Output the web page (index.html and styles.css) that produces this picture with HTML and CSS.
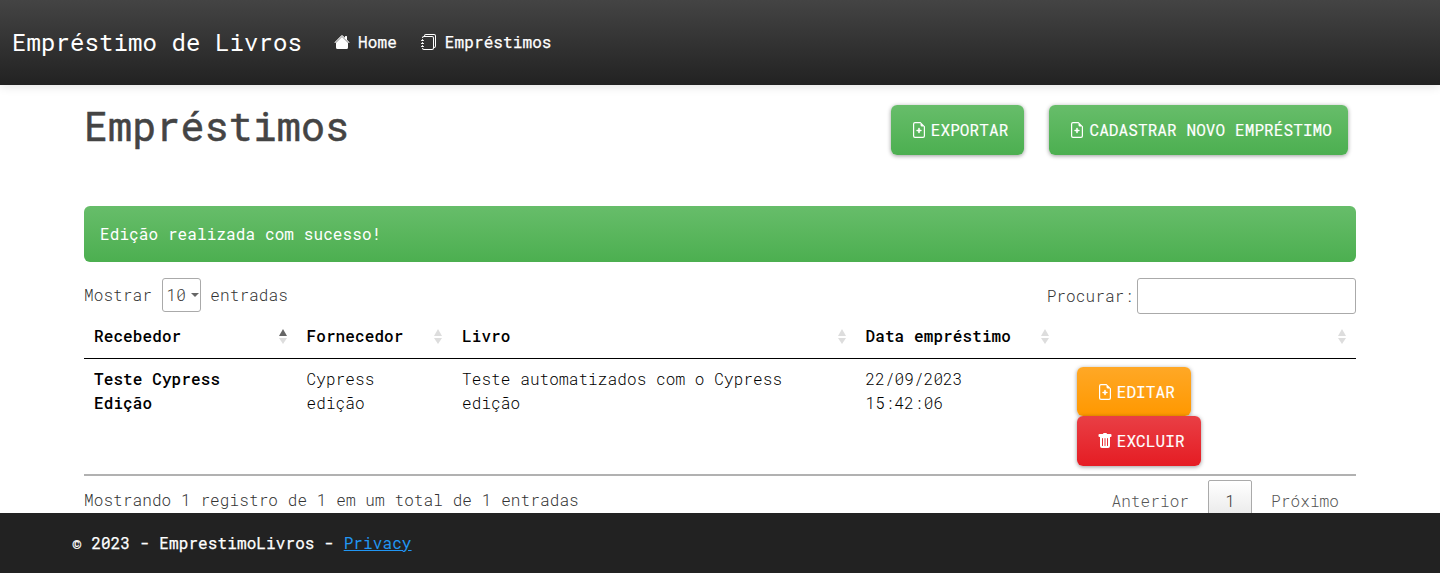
FILE: index.html
```html
<!DOCTYPE html>
<html lang="pt-BR">
<head>
<meta charset="utf-8">
<title>Empréstimos</title>
<link rel="stylesheet" href="styles.css">
</head>
<body>
<svg class="defs" width="0" height="0">
  <symbol id="file-plus" viewBox="0 0 16 16">
    <path d="M8 5.800a.8.8 0 0 1 .8.8V7.700H9.900a.8.8 0 0 1 0 1.600H8.800V10.400a.8.8 0 0 1-1.600 0V9.300H6.100a.8.8 0 0 1 0-1.600H7.200V6.600A.8.8 0 0 1 8 5.800z"/>
    <path d="M14 4.500V14a2 2 0 0 1-2 2H4a2 2 0 0 1-2-2V2a2 2 0 0 1 2-2h5.500L14 4.500zm-3 0A1.500 1.500 0 0 1 9.500 3V1.200H4a.9.9 0 0 0-.8.800v12a.9.9 0 0 0 .8.800h8a.9.9 0 0 0 .8-.8V4.500h-1.800z"/>
  </symbol>
</svg>
<header class="navbar">
  <a class="brand">Empréstimo de Livros</a>
  <a class="nav-link home"><svg class="icon" viewBox="0 0 16 16"><path d="M8.707 1.500a1 1 0 0 0-1.414 0L.646 8.146a.5.5 0 0 0 .708.708L8 2.207l6.646 6.647a.5.5 0 0 0 .708-.708L13 5.793V2.500a.5.5 0 0 0-.5-.5h-1a.5.5 0 0 0-.5.5v1.293L8.707 1.500Z"/><path d="m8 2.800 6 6V13.500a1.500 1.500 0 0 1-1.500 1.500h-9A1.500 1.500 0 0 1 2 13.500V8.800l6-6Z"/></svg>Home</a>
  <a class="nav-link"><svg class="icon" viewBox="0 0 16 16"><path d="M5 0h8a2 2 0 0 1 2 2v10a2 2 0 0 1-2 2 2 2 0 0 1-2 2H3a2 2 0 0 1-2-2h1a1 1 0 0 0 1 1h8a1 1 0 0 0 1-1V4a1 1 0 0 0-1-1H3a1 1 0 0 0-1 1H1a2 2 0 0 1 2-2h8a2 2 0 0 1 2 2v9a1 1 0 0 0 1-1V2a1 1 0 0 0-1-1H5a1 1 0 0 0-1 1H3a2 2 0 0 1 2-2z"/><path d="M1 6v-.5a.5.5 0 0 1 1 0V6h.5a.5.5 0 0 1 0 1h-2a.5.5 0 0 1 0-1H1zm0 3v-.5a.5.5 0 0 1 1 0V9h.5a.5.5 0 0 1 0 1h-2a.5.5 0 0 1 0-1H1zm0 2.500v.5H.5a.5.5 0 0 0 0 1h2a.5.5 0 0 0 0-1H2v-.5a.5.5 0 0 0-1 0z"/></svg>Empréstimos</a>
</header>
<main class="container">
  <div class="heading">
    <h1>Empréstimos</h1>
    <div class="actions">
      <a class="btn green"><svg class="icon"><use href="#file-plus"/></svg>EXPORTAR</a>
      <a class="btn green"><svg class="icon"><use href="#file-plus"/></svg>CADASTRAR NOVO EMPRÉSTIMO</a>
    </div>
  </div>
  <div class="alert">Edição realizada com sucesso!</div>
  <div class="controls">
    <label class="length">Mostrar <span class="select">10<i class="caret"></i></span> entradas</label>
    <label class="search">Procurar:<input type="text"></label>
  </div>
  <table>
    <colgroup><col class="c1"><col class="c2"><col class="c3"><col class="c4"><col></colgroup>
    <thead>
      <tr>
        <th><div class="th">Recebedor<i class="sort asc"></i></div></th>
        <th><div class="th">Fornecedor<i class="sort"></i></div></th>
        <th><div class="th">Livro<i class="sort"></i></div></th>
        <th><div class="th">Data empréstimo<i class="sort"></i></div></th>
        <th><div class="th"><span></span><i class="sort"></i></div></th>
      </tr>
    </thead>
    <tbody>
      <tr>
        <td class="strong">Teste Cypress<br>Edição</td>
        <td>Cypress<br>edição</td>
        <td>Teste automatizados com o Cypress<br>edição</td>
        <td>22/09/2023<br>15:42:06</td>
        <td><div class="row-actions">
          <a class="btn orange"><svg class="icon"><use href="#file-plus"/></svg>EDITAR</a>
          <a class="btn red"><svg class="icon" viewBox="0 0 16 16"><path d="M2.500 1a1 1 0 0 0-1 1v1a1 1 0 0 0 1 1H3v9a2 2 0 0 0 2 2h6a2 2 0 0 0 2-2V4h.5a1 1 0 0 0 1-1V2a1 1 0 0 0-1-1H10a1 1 0 0 0-1-1H7a1 1 0 0 0-1 1H2.500zm3 4a.5.5 0 0 1 .5.5v7a.5.5 0 0 1-1 0v-7a.5.5 0 0 1 .5-.5zM8 5a.5.5 0 0 1 .5.5v7a.5.5 0 0 1-1 0v-7A.5.5 0 0 1 8 5zm3 .5v7a.5.5 0 0 1-1 0v-7a.5.5 0 0 1 1 0z"/></svg>EXCLUIR</a>
        </div></td>
      </tr>
    </tbody>
  </table>
  <div class="table-footer">
    <div class="info">Mostrando 1 registro de 1 em um total de 1 entradas</div>
    <div class="pages"><a>Anterior</a><a class="current">1</a><a>Próximo</a></div>
  </div>
</main>
<footer class="footer">© 2023 - EmprestimoLivros - <a>Privacy</a></footer>
</body>
</html>
```
FILE: styles.css
```css
* { box-sizing: border-box; }
html, body { height: 100%; }
body {
  margin: 0;
  display: flex;
  flex-direction: column;
  overflow: hidden;
  background: #fff;
  color: #333;
  font: 300 16px/24px "Roboto Mono", "Liberation Mono", monospace;
  letter-spacing: .1px;
}
.defs { position: absolute; }
.icon { width: 16px; height: 16px; fill: currentColor; flex: none; }
.navbar {
  flex: none;
  height: 85px;
  padding: 0 0 2px 12px;
  display: flex;
  align-items: center;
  color: #fff;
  background: linear-gradient(#444, #222);
  box-shadow: 0 1px 10px rgba(0, 0, 0, .12);
}
.brand { font-size: 24px; font-weight: 400; margin-right: 32px; }
.nav-link {
  display: flex;
  align-items: center;
  gap: 8px;
  font-weight: 400;
  -webkit-text-stroke: .25px;
}
.nav-link.home { margin-right: 24px; }
.container {
  flex: 1;
  min-height: 0;
  width: 1272px;
  margin: 0 auto;
  padding-top: 20px;
}
.heading { display: flex; justify-content: space-between; align-items: flex-start; height: 101px; }
h1 {
  margin: -3px 0 0;
  color: #444;
  font-size: 40px;
  line-height: 48px;
  font-weight: 400;
  -webkit-text-stroke: .5px;
}
.actions { display: flex; gap: 25px; padding-right: 8px; }
.btn {
  display: flex;
  align-items: center;
  gap: 4.100px;
  height: 50px;
  padding: 0 16px 0 20px;
  color: #fff;
  font-weight: 400;
  -webkit-text-stroke: .15px;
  border-radius: 6px;
  white-space: nowrap;
  box-shadow: 0 1px 4px rgba(0, 0, 0, .4);
}
.green, .alert { background: linear-gradient(#67bd6a, #4caf50); }
.orange { background: linear-gradient(#ffa826, #ff9800); }
.red { background: linear-gradient(#e93f45, #e51c23); }
.alert { height: 56px; padding: 16px; color: #fff; font-weight: 400; border-radius: 6px; }
.controls { display: flex; justify-content: space-between; align-items: flex-start; height: 54px; padding-top: 16px; }
.length { display: flex; align-items: center; gap: 9.700px; height: 34px; }
.select {
  display: flex;
  align-items: center;
  width: 39px;
  height: 34px;
  padding-left: 4px;
  border: 1px solid #aaa;
  border-radius: 3px;
}
.caret { border: 4px solid transparent; border-top-color: #666; border-bottom: 0; margin-left: 5px; }
.search { display: flex; align-items: center; gap: 3px; }
.search input { width: 219px; height: 36px; border: 1px solid #aaa; border-radius: 3px; background: #fff; }
table { width: 100%; table-layout: fixed; border-collapse: separate; border-spacing: 0; color: #000; }
.c1 { width: 212.500px; }
.c2 { width: 155.500px; }
.c3 { width: 403.500px; }
.c4 { width: 203.500px; }
th {
  height: 43px;
  padding: 0 10px 2px;
  border-bottom: 1px solid #000;
  text-align: left;
}
th, .strong { font-weight: 500; }
.th { display: flex; justify-content: space-between; align-items: center; }
.sort { display: flex; flex-direction: column; gap: 2px; padding-top: 1px; }
.sort::before, .sort::after { content: ""; border: 3.500px solid transparent; border-width: 0 4px; }
.sort::before { border-bottom: 7px solid #ddd; }
.sort::after { border-top: 6px solid #ddd; }
.sort.asc::before { border-bottom-color: #666; }
td { height: 117px; padding: 8px 10px; vertical-align: top; border-bottom: 2px solid #b1b1b1; }
.row-actions { display: flex; flex-direction: column; align-items: flex-start; padding-left: 8px; }
.row-actions .btn { height: 49px; gap: 3.700px; }
.row-actions .red { height: 50px; }
.table-footer { display: flex; justify-content: space-between; padding-top: 4px; }
.info { padding-top: 8px; }
.pages { display: flex; color: #555; }
.pages a { padding: 9px 17px; }
.pages .current {
  width: 44px;
  height: 44px;
  margin: 0 2px;
  padding: 8px 0;
  text-align: center;
  color: #333;
  border: 1px solid #aaa;
  border-radius: 2px;
  background: linear-gradient(#fff, #e6e6e6);
}
.footer {
  flex: none;
  position: relative;
  height: 60px;
  padding: 18px 72px;
  color: #fff;
  font-weight: 400;
  -webkit-text-stroke: .25px;
  background: #222;
  white-space: pre;
}
.footer a { color: #2196f3; text-decoration: underline; -webkit-text-stroke: 0; }
```
